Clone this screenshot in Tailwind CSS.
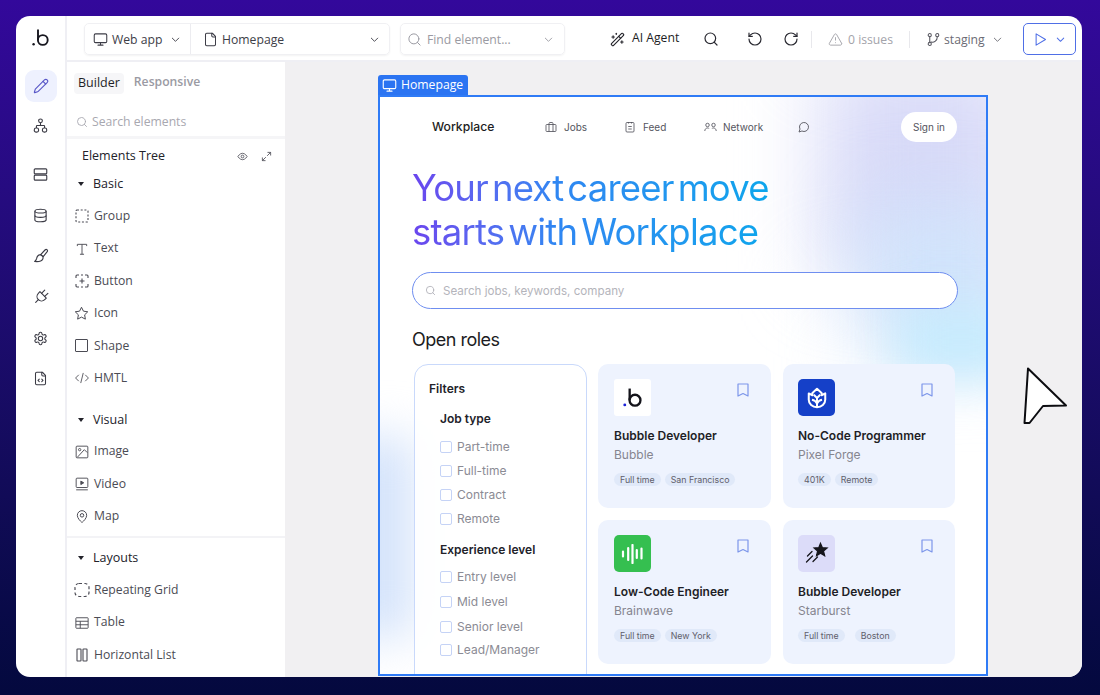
<!DOCTYPE html>
<html lang="en">
<head>
    <meta charset="UTF-8">
    <meta name="viewport" content="width=device-width, initial-scale=1.0">
    <title>Builder</title>
    <script src="https://cdn.jsdelivr.net/npm/@tailwindcss/browser@4"></script>
</head>
<body class="h-[695px] w-[1100px] overflow-hidden bg-linear-to-b from-[#33089b] to-[#04093e] pt-4 pl-4 font-['Open_Sans',sans-serif]">
    <div class="flex h-[661px] w-[1066px] overflow-hidden rounded-[14px] bg-white relative">

        <!-- Icon rail -->
        <aside class="w-[51px] shrink-0 border-r-2 border-[#efeff4] flex flex-col items-center text-[#3b3b45]">
            <div class="h-[50px] w-full flex items-center justify-center pb-[6px] pl-px">
                <svg width="18" height="18" viewBox="0 0 18 18" fill="none" stroke="#17171f" stroke-width="1.9"><circle cx="1.6" cy="15.2" r="1.2" fill="#17171f" stroke="none"/><path d="M6 0.5V11"/><circle cx="10.8" cy="11" r="4.9"/></svg>
            </div>
            <div class="h-10 flex items-center justify-center">
                <div class="size-8 rounded-[9px] bg-[#eef1fe] flex items-center justify-center text-[#5a58c8]">
                    <svg width="16" height="16" viewBox="0 0 24 24" fill="none" stroke="currentColor" stroke-width="1.7" stroke-linecap="round" stroke-linejoin="round"><path d="M21.174 6.812a1 1 0 0 0-3.986-3.987L3.842 16.174a2 2 0 0 0-.5.83l-1.321 4.352a.5.5 0 0 0 .623.622l4.353-1.32a2 2 0 0 0 .83-.497z"/><path d="m15 5 4 4"/></svg>
                </div>
            </div>
            <div class="h-[39px] mb-[9.500px] flex items-center justify-center">
                <svg width="15" height="15" viewBox="0 0 24 24" fill="none" stroke="currentColor" stroke-width="1.8" stroke-linejoin="round"><rect x="15" y="16" width="7" height="6.5" rx="3"/><rect x="2" y="16" width="7" height="6.5" rx="3"/><rect x="9" y="1.5" width="6" height="6" rx="3"/><path d="M5.5 16v-3a1 1 0 0 1 1-1h11a1 1 0 0 1 1 1v3"/><path d="M12 12V7.5"/></svg>
            </div>
            <div class="h-[40.800px] flex items-center justify-center">
                <svg width="15" height="15" viewBox="0 0 24 24" fill="none" stroke="currentColor" stroke-width="1.8"><rect x="2" y="3" width="20" height="8" rx="1.5"/><rect x="2" y="13" width="20" height="8" rx="1.5"/><path d="M6 7h.01M6 17h.01"/></svg>
            </div>
            <div class="h-[40.800px] flex items-center justify-center">
                <svg width="15" height="15" viewBox="0 0 24 24" fill="none" stroke="currentColor" stroke-width="1.8"><ellipse cx="12" cy="5" rx="9" ry="3"/><path d="M3 5V19A9 3 0 0 0 21 19V5"/><path d="M3 12A9 3 0 0 0 21 12"/></svg>
            </div>
            <div class="h-[40.800px] flex items-center justify-center">
                <svg width="16" height="16" viewBox="0 0 24 24" fill="none" stroke="currentColor" stroke-width="1.7" stroke-linejoin="round"><path d="M21 2.500c1 .5 1 2 .3 3l-6 7.500-3.800-3 6.500-7c1-1 2-1.200 3-.5z"/><path d="M11.500 10l3.500 3c.5 3-1 5.500-3.500 6.500-2.500 1-6 1-9 .7 1.500-1 2.500-2.200 3-4.500.5-3 3-5.500 6-5.700z"/></svg>
            </div>
            <div class="h-[40.800px] flex items-center justify-center">
                <svg class="rotate-45" width="18" height="18" viewBox="0 0 24 24" fill="none" stroke="currentColor" stroke-width="1.5" stroke-linecap="round" stroke-linejoin="round"><path d="M9 2v6"/><path d="M15 2v6"/><path d="M12 17v5"/><path d="M6 8h12v3a6 6 0 1 1-12 0z"/></svg>
            </div>
            <div class="h-[40.800px] flex items-center justify-center">
                <svg width="15" height="15" viewBox="0 0 24 24" fill="none" stroke="currentColor" stroke-width="1.7" stroke-linecap="round" stroke-linejoin="round"><path d="M12.220 2h-.44a2 2 0 0 0-2 2v.18a2 2 0 0 1-1 1.730l-.43.25a2 2 0 0 1-2 0l-.15-.08a2 2 0 0 0-2.730.73l-.22.38a2 2 0 0 0 .73 2.730l.15.1a2 2 0 0 1 1 1.720v.51a2 2 0 0 1-1 1.740l-.15.09a2 2 0 0 0-.73 2.730l.22.38a2 2 0 0 0 2.730.73l.15-.08a2 2 0 0 1 2 0l.43.25a2 2 0 0 1 1 1.730V20a2 2 0 0 0 2 2h.44a2 2 0 0 0 2-2v-.18a2 2 0 0 1 1-1.730l.43-.25a2 2 0 0 1 2 0l.15.08a2 2 0 0 0 2.730-.73l.22-.39a2 2 0 0 0-.73-2.730l-.15-.08a2 2 0 0 1-1-1.740v-.5a2 2 0 0 1 1-1.740l.15-.09a2 2 0 0 0 .73-2.730l-.22-.38a2 2 0 0 0-2.730-.73l-.15.08a2 2 0 0 1-2 0l-.43-.25a2 2 0 0 1-1-1.730V4a2 2 0 0 0-2-2z"/><circle cx="12" cy="12" r="3.500"/></svg>
            </div>
            <div class="h-[40.800px] flex items-center justify-center">
                <svg width="15" height="15" viewBox="0 0 24 24" fill="none" stroke="currentColor" stroke-width="1.7" stroke-linecap="round" stroke-linejoin="round"><path d="M15 2H6a2 2 0 0 0-2 2v16a2 2 0 0 0 2 2h12a2 2 0 0 0 2-2V7Z"/><path d="M14 2v4a2 2 0 0 0 2 2h4"/><path d="m10 13-2 2 2 2"/><path d="m14 17 2-2-2-2"/></svg>
            </div>
        </aside>

        <div class="flex-1 flex flex-col min-w-0">
            <!-- Top bar -->
            <header class="h-[46px] shrink-0 border-b-2 border-[#efeff4] flex items-center whitespace-nowrap pl-[17px] pt-[2px] text-[12.200px] text-[#3d3d47]">
                <div class="flex h-8 w-[306px] items-center rounded-[5px] border border-[#f0f0f3] shadow-[0_1px_2px_#0000000d]">
                    <div class="flex h-full w-[106px] items-center border-r border-[#ececf0] pl-[8px]">
                        <svg width="15" height="15" viewBox="0 0 24 24" fill="none" stroke="currentColor" stroke-width="1.7" stroke-linecap="round" stroke-linejoin="round"><rect x="2" y="3" width="20" height="14" rx="2"/><path d="M8 21h8M12 17v4"/></svg>
                        <span class="ml-[4px] mt-[2px]">Web app</span>
                        <svg class="ml-[8px]" width="11" height="11" viewBox="0 0 24 24" fill="none" stroke="currentColor" stroke-width="2" stroke-linecap="round" stroke-linejoin="round"><path d="m5 9 7 7 7-7"/></svg>
                    </div>
                    <div class="flex h-full flex-1 items-center pl-[12px] pr-[9px]">
                        <svg width="15" height="15" viewBox="0 0 24 24" fill="none" stroke="currentColor" stroke-width="1.7" stroke-linecap="round" stroke-linejoin="round"><path d="M15 2H6a2 2 0 0 0-2 2v16a2 2 0 0 0 2 2h12a2 2 0 0 0 2-2V7Z"/><path d="M14 2v4a2 2 0 0 0 2 2h4"/></svg>
                        <span class="ml-[4px] mt-[2px]">Homepage</span>
                        <svg class="ml-auto" width="11" height="11" viewBox="0 0 24 24" fill="none" stroke="currentColor" stroke-width="2" stroke-linecap="round" stroke-linejoin="round"><path d="m5 9 7 7 7-7"/></svg>
                    </div>
                </div>
                <div class="ml-[10px] flex h-8 w-[165px] items-center rounded-[5px] border border-[#f0f0f3] shadow-[0_1px_2px_#0000000d] pl-[6px] pr-[10px] text-[#9a9aa2]">
                    <svg width="15" height="15" viewBox="0 0 24 24" fill="none" stroke="currentColor" stroke-width="1.6" stroke-linecap="round"><circle cx="11" cy="11" r="8"/><path d="m21 21-4.300-4.300"/></svg>
                    <span class="ml-[5px] mt-[2px]">Find element...</span>
                    <svg class="ml-auto" width="11" height="11" viewBox="0 0 24 24" fill="none" stroke="currentColor" stroke-width="2" stroke-linecap="round" stroke-linejoin="round"><path d="m5 9 7 7 7-7"/></svg>
                </div>
                <svg class="ml-[45px] text-[#222229]" width="15" height="15" viewBox="0 0 24 24" fill="none" stroke="currentColor" stroke-width="1.800" stroke-linecap="round" stroke-linejoin="round"><path d="m21.640 3.640-1.280-1.280a1.210 1.210 0 0 0-1.720 0L2.360 18.640a1.210 1.210 0 0 0 0 1.720l1.280 1.280a1.200 1.200 0 0 0 1.720 0L21.640 5.360a1.200 1.200 0 0 0 0-1.720"/><path d="m14 7 3 3"/><path d="M5 6v4"/><path d="M19 14v4"/><path d="M10 2v2"/><path d="M7 8H3"/><path d="M21 16h-4"/></svg>
                <span class="ml-[7px] mb-[1px] w-[50px] text-[#1d1d24]">AI Agent</span>
                <svg class="ml-[21px] text-[#2a2a32]" width="16" height="16" viewBox="0 0 24 24" fill="none" stroke="currentColor" stroke-width="1.800" stroke-linecap="round"><circle cx="11" cy="11" r="8"/><path d="m21 21-4.300-4.300"/></svg>
                <svg class="ml-[28px] text-[#2a2a32]" width="16" height="16" viewBox="0 0 24 24" fill="none" stroke="currentColor" stroke-width="1.800" stroke-linecap="round" stroke-linejoin="round"><path d="M3 12a9 9 0 1 0 9-9 9.750 9.750 0 0 0-6.740 2.740L3 8"/><path d="M3 3v5h5"/></svg>
                <svg class="ml-[20px] text-[#2a2a32]" width="16" height="16" viewBox="0 0 24 24" fill="none" stroke="currentColor" stroke-width="1.800" stroke-linecap="round" stroke-linejoin="round"><path d="M21 12a9 9 0 1 1-9-9c2.520 0 4.930 1 6.740 2.740L21 8"/><path d="M21 3v5h-5"/></svg>
                <div class="ml-[12px] h-[17px] w-px bg-[#e8e8ec]"></div>
                <svg class="ml-[16px] text-[#a3a3aa]" width="15" height="15" viewBox="0 0 24 24" fill="none" stroke="currentColor" stroke-width="1.500" stroke-linecap="round" stroke-linejoin="round"><path d="m21.730 18-8-14a2 2 0 0 0-3.480 0l-8 14A2 2 0 0 0 4 21h16a2 2 0 0 0 1.730-3"/><path d="M12 9v4"/><path d="M12 17h.01"/></svg>
                <span class="ml-[5px] mt-[2px] w-[44px] text-[#a3a3aa]">0 issues</span>
                <div class="ml-[17px] h-[17px] w-px bg-[#e8e8ec]"></div>
                <svg class="ml-[16px] text-[#55555e]" width="15" height="15" viewBox="0 0 24 24" fill="none" stroke="currentColor" stroke-width="1.700" stroke-linecap="round"><path d="M6 7v10"/><circle cx="6" cy="5" r="2.500"/><circle cx="18" cy="5" r="2.500"/><circle cx="6" cy="19" r="2.500"/><path d="M18 8a8 8 0 0 1-10 8"/></svg>
                <span class="ml-[3px] mt-[2px] w-[41px] text-[#6b6b74]">staging</span>
                <svg class="ml-[7px] text-[#6b6b74]" width="11" height="11" viewBox="0 0 24 24" fill="none" stroke="currentColor" stroke-width="2" stroke-linecap="round" stroke-linejoin="round"><path d="m5 9 7 7 7-7"/></svg>
                <div class="ml-[20px] flex h-8 w-[53px] shrink-0 items-center justify-center gap-[7px] rounded-[5px] border border-[#4f6fe6] text-[#4f6fe6]">
                    <svg width="15" height="15" viewBox="0 0 24 24" fill="none" stroke="currentColor" stroke-width="1.700" stroke-linejoin="round"><polygon points="5 3 20 12 5 21 5 3"/></svg>
                    <svg width="11" height="11" viewBox="0 0 24 24" fill="none" stroke="currentColor" stroke-width="2.200" stroke-linecap="round" stroke-linejoin="round"><path d="m5 9 7 7 7-7"/></svg>
                </div>
            </header>

            <div class="flex flex-1 min-h-0">
                <!-- Elements panel -->
                <section class="w-[218px] shrink-0 text-[12.200px] text-[#4b4b54]">
                    <div class="h-[77px] border-b-[3px] border-[#f5f5f7] pl-[7px] text-[12.500px]">
                        <div class="flex items-center pt-[11px]">
                            <span class="rounded-[4px] bg-[#f6f6f8] px-1 py-[1px] text-[#1f1f27]">Builder</span>
                            <span class="ml-[10px] mb-[2px] text-[12.200px] font-semibold text-[#9a9aa3]">Responsive</span>
                        </div>
                        <div class="mt-[19px] flex items-center pl-[2px] text-[12.200px] text-[#a8a8b0]">
                            <svg width="12" height="12" viewBox="0 0 24 24" fill="none" stroke="currentColor" stroke-width="1.800" stroke-linecap="round"><circle cx="11" cy="11" r="8"/><path d="m21 21-4.300-4.300"/></svg>
                            <span class="ml-[4px]">Search elements</span>
                        </div>
                    </div>
                    <div class="mt-px flex h-[32px] items-center justify-between pl-[15px] pr-[13px] text-[12.500px] text-[#22222a]">
                        <span class="font-medium">Elements Tree</span>
                        <div class="flex items-center gap-[13px] text-[#5b5b64]">
                            <svg width="11" height="11" viewBox="0 0 24 24" fill="none" stroke="currentColor" stroke-width="2"><path d="M2 12s4-7 10-7 10 7 10 7-4 7-10 7-10-7-10-7z"/><circle cx="12" cy="12" r="3"/></svg>
                            <svg width="11" height="11" viewBox="0 0 24 24" fill="none" stroke="currentColor" stroke-width="2" stroke-linecap="round" stroke-linejoin="round"><path d="M3 21l7-7"/><path d="M14 10l7-7"/><path d="M15 3h6v6"/><path d="M3 15v6h6"/></svg>
                        </div>
                    </div>
                    <div class="flex h-[24px] items-center pl-[11px] text-[12.500px] font-medium text-[#22222a]"><span class="h-0 w-0 border-x-[3.500px] border-t-[4px] border-x-transparent border-t-[#22222a]"></span><span class="ml-[9px]">Basic</span></div>

                    <div class="flex h-[32.400px] items-center pl-[8px] mt-[4px]">
                        <svg width="14" height="14" viewBox="0 0 14 14" fill="none" stroke="currentColor" stroke-width="1.100" stroke-dasharray="2 1.700"><rect x="1" y="1" width="12" height="12" rx="1"/></svg>
                        <span class="ml-[5px]">Group</span>
                    </div>
                    <div class="flex h-[32.400px] items-center pl-[8px]">
                        <svg width="14" height="14" viewBox="0 0 24 24" fill="none" stroke="currentColor" stroke-width="1.600"><path d="M4 7V4h16v3"/><path d="M8.500 21h7"/><path d="M12 4v17"/></svg>
                        <span class="ml-[5px]">Text</span>
                    </div>
                    <div class="flex h-[32.400px] items-center pl-[8px]">
                        <svg width="14" height="14" viewBox="0 0 14 14" fill="none" stroke="currentColor" stroke-width="1.100"><path d="M1 4V2a1 1 0 0 1 1-1h2M10 1h2a1 1 0 0 1 1 1v2M13 10v2a1 1 0 0 1-1 1h-2M4 13H2a1 1 0 0 1-1-1v-2M7 4.500v5M4.500 7h5M6 1h2M6 13h2"/></svg>
                        <span class="ml-[5px]">Button</span>
                    </div>
                    <div class="flex h-[32.400px] items-center pl-[7px]">
                        <svg width="15" height="15" viewBox="0 0 24 24" fill="none" stroke="currentColor" stroke-width="1.600" stroke-linejoin="round"><path d="M12 2l3.090 6.260L22 9.270l-5 4.870 1.180 6.880L12 17.770l-6.180 3.250L7 14.140 2 9.270l6.910-1.010z"/></svg>
                        <span class="ml-[5px]">Icon</span>
                    </div>
                    <div class="flex h-[32.400px] items-center pl-[8px]">
                        <span class="size-[13px] rounded-[1px] border border-[#4b4b54]"></span>
                        <span class="ml-[6px]">Shape</span>
                    </div>
                    <div class="flex h-[32.400px] items-center pl-[7px]">
                        <svg width="16" height="14" viewBox="0 0 24 24" fill="none" stroke="currentColor" stroke-width="1.500" stroke-linecap="round" stroke-linejoin="round"><path d="m6 7-5 5 5 5"/><path d="m18 7 5 5-5 5"/><path d="m14 4-4 16"/></svg>
                        <span class="ml-[4px]">HMTL</span>
                    </div>

                    <div class="flex h-[24px] items-center pl-[11px] mt-[14px] text-[12.500px] font-medium text-[#22222a]"><span class="h-0 w-0 border-x-[3.500px] border-t-[4px] border-x-transparent border-t-[#22222a]"></span><span class="ml-[9px]">Visual</span></div>
                    <div class="flex h-[32.400px] items-center pl-[8px] mt-[3px]">
                        <svg width="14" height="14" viewBox="0 0 24 24" fill="none" stroke="currentColor" stroke-width="1.600"><rect x="2" y="2" width="20" height="20" rx="1.500"/><circle cx="8" cy="8" r="2"/><path d="m21 13-5-5L4 21"/></svg>
                        <span class="ml-[5px]">Image</span>
                    </div>
                    <div class="flex h-[32.400px] items-center pl-[8px]">
                        <svg width="14" height="14" viewBox="0 0 24 24" fill="none" stroke="currentColor" stroke-width="1.600"><rect x="2" y="2" width="20" height="16" rx="1.500"/><path d="M2 22h20"/><path d="M10 7l5 3-5 3z" fill="currentColor"/></svg>
                        <span class="ml-[5px]">Video</span>
                    </div>
                    <div class="flex h-[32.400px] items-center pl-[8px]">
                        <svg width="14" height="15" viewBox="0 0 24 24" fill="none" stroke="currentColor" stroke-width="1.700"><path d="M20 10c0 4.993-5.539 10.193-7.399 11.799a1 1 0 0 1-1.202 0C9.539 20.193 4 14.993 4 10a8 8 0 0 1 16 0"/><circle cx="12" cy="10" r="3"/></svg>
                        <span class="ml-[5px]">Map</span>
                    </div>
                    <div class="mt-[3px] h-[2px] bg-[#f3f3f6]"></div>

                    <div class="flex h-[24px] items-center pl-[11px] mt-[8.500px] text-[12.500px] font-medium text-[#22222a]"><span class="h-0 w-0 border-x-[3.500px] border-t-[4px] border-x-transparent border-t-[#22222a]"></span><span class="ml-[9px]">Layouts</span></div>
                    <div class="flex h-[32.400px] items-center pl-[7px] mt-[4px]">
                        <svg width="16" height="16" viewBox="0 0 16 16" fill="none" stroke="currentColor" stroke-width="1.200" stroke-dasharray="3 2.400"><rect x="1" y="1.500" width="14" height="13" rx="4"/></svg>
                        <span class="ml-[4px]">Repeating Grid</span>
                    </div>
                    <div class="flex h-[32.400px] items-center pl-[8px]">
                        <svg width="14" height="14" viewBox="0 0 24 24" fill="none" stroke="currentColor" stroke-width="1.600"><rect x="1.500" y="3" width="21" height="18" rx="1"/><path d="M1.500 9h21M1.500 15h21M9 9v12"/></svg>
                        <span class="ml-[5px]">Table</span>
                    </div>
                    <div class="flex h-[32.400px] items-center pl-[9px]">
                        <svg width="12" height="14" viewBox="0 0 12 14" fill="none" stroke="currentColor" stroke-width="1.100"><rect x="1" y="1" width="4" height="12" rx=".6"/><rect x="7" y="1" width="4" height="12" rx=".6"/></svg>
                        <span class="ml-[6px]">Horizontal List</span>
                    </div>
                </section>

                <!-- Canvas -->
                <main class="flex-1 min-w-0 bg-[#f1f0f2] pl-[93px] pt-[13px] flex flex-col relative">
                    <div class="flex h-5 w-[90px] items-center gap-[4px] rounded-t-[3px] bg-[#2b74f2] pl-[4px] text-[12.200px] text-white">
                        <svg width="15" height="15" viewBox="0 0 24 24" fill="none" stroke="currentColor" stroke-width="1.800" stroke-linecap="round" stroke-linejoin="round"><rect x="2" y="3" width="20" height="14" rx="2"/><path d="M8 21h8M12 17v4"/></svg>
                        <span>Homepage</span>
                    </div>
                    <div class="relative mb-px h-[581px] w-[610px] overflow-hidden border-2 border-[#2f7bf6] bg-white font-['Inter',sans-serif]">
                        <!-- Background blurs -->
                        <div class="absolute -right-[40px] -top-[40px] h-[220px] w-[205px] bg-[#d8daf8] blur-2xl"></div>
                        <div class="absolute -right-[40px] top-[110px] h-[150px] w-[165px] bg-[#cfe3fb] blur-2xl"></div>
                        <div class="absolute -right-[40px] top-[210px] h-[70px] w-[130px] bg-[#c6ebfd] blur-xl"></div>
                        <div class="absolute -left-[50px] top-[340px] h-[200px] w-[85px] bg-[#d4e3fb] blur-xl"></div>

                        <div class="relative">
                            <!-- Site nav -->
                            <div class="flex h-[30px] items-center pl-[52px] mt-[15px] text-[10px] text-[#55555e]">
                                <span class="w-[113px] text-[12.200px] font-medium text-[#1c1c22]">Workplace</span>
                                <svg width="12" height="12" viewBox="0 0 24 24" fill="none" stroke="currentColor" stroke-width="1.700"><rect x="2" y="7" width="20" height="14" rx="1.500"/><path d="M8 21V5a2 2 0 0 1 2-2h4a2 2 0 0 1 2 2v16"/></svg>
                                <span class="ml-[7px] w-[60px]">Jobs</span>
                                <svg width="12" height="12" viewBox="0 0 24 24" fill="none" stroke="currentColor" stroke-width="1.700"><rect x="4" y="3" width="16" height="19" rx="2"/><path d="M9 2v3M15 2v3M8.500 11h7M8.500 16h7"/></svg>
                                <span class="ml-[7px] w-[61px]">Feed</span>
                                <svg width="13" height="12" viewBox="0 0 26 24" fill="none" stroke="currentColor" stroke-width="1.700"><circle cx="7" cy="8" r="3.500"/><circle cx="19" cy="8" r="3.500"/><path d="M1.500 20c.5-4 2.500-6 5.500-6s3 1 3 1M24.500 20c-.5-4-2.500-6-5.500-6s-3 1-3 1"/></svg>
                                <span class="ml-[6px] w-[75px]">Network</span>
                                <svg width="12" height="12" viewBox="0 0 24 24" fill="none" stroke="currentColor" stroke-width="1.800" stroke-linejoin="round"><path d="M7.900 20A9 9 0 1 0 4 16.100L2 22z"/></svg>
                                <span class="ml-[91px] flex h-[30px] w-[56px] items-center justify-center rounded-full bg-white">Sign in</span>
                            </div>

                            <!-- Hero -->
                            <div class="pl-[32px]">
                                <h1 class="mt-6 w-fit bg-linear-to-r from-[#6a45ee] via-[#2f86f2] via-40% to-[#0aa5ec] bg-clip-text text-[36.500px] leading-[44px] font-normal tracking-[-0.800px] [word-spacing:-5.500px] text-transparent">Your next career move<br>starts with Workplace</h1>
                                <div class="mt-[18px] flex h-[37px] w-[546px] items-center rounded-full border border-[#6f8ef0] bg-white pl-[12px] text-[11.600px] text-[#b4b4bb]">
                                    <svg width="11" height="11" viewBox="0 0 24 24" fill="none" stroke="currentColor" stroke-width="2" stroke-linecap="round"><circle cx="11" cy="11" r="8"/><path d="m21 21-4.300-4.300"/></svg>
                                    <span class="ml-[7px] mt-[2px]">Search jobs, keywords, company</span>
                                </div>
                                <h2 class="mt-[19px] h-6 text-[18px] leading-6 tracking-[-0.500px] text-[#1c1c22]">Open roles</h2>

                                <div class="mt-3 flex gap-[11px] pl-[2px]">
                                    <!-- Filters -->
                                    <div class="h-[330px] w-[173px] shrink-0 rounded-[14px] border border-[#c9d9fb] bg-white/90 pl-[14px] pt-[16px] text-[12px] text-[#8b8b94]">
                                        <p class="font-semibold leading-[15px] text-[#22222a]">Filters</p>
                                        <p class="ml-[11px] mt-[15px] font-semibold leading-[15px] text-[#22222a]">Job type</p>
                                        <div class="ml-[11px] mt-[13px] flex h-[15px] items-center gap-[5px]"><span class="size-[12px] rounded-[2px] border border-[#c5d3f6]"></span>Part-time</div>
                                        <div class="ml-[11px] mt-[9.300px] flex h-[15px] items-center gap-[5px]"><span class="size-[12px] rounded-[2px] border border-[#c5d3f6]"></span>Full-time</div>
                                        <div class="ml-[11px] mt-[9.300px] flex h-[15px] items-center gap-[5px]"><span class="size-[12px] rounded-[2px] border border-[#c5d3f6]"></span>Contract</div>
                                        <div class="ml-[11px] mt-[9.300px] flex h-[15px] items-center gap-[5px]"><span class="size-[12px] rounded-[2px] border border-[#c5d3f6]"></span>Remote</div>
                                        <p class="ml-[11px] mt-[15px] font-semibold leading-[15px] text-[#22222a]">Experience level</p>
                                        <div class="ml-[11px] mt-[13px] flex h-[15px] items-center gap-[5px]"><span class="size-[12px] rounded-[2px] border border-[#c5d3f6]"></span>Entry level</div>
                                        <div class="ml-[11px] mt-[10px] flex h-[15px] items-center gap-[5px]"><span class="size-[12px] rounded-[2px] border border-[#c5d3f6]"></span>Mid level</div>
                                        <div class="ml-[11px] mt-[9.300px] flex h-[15px] items-center gap-[5px]"><span class="size-[12px] rounded-[2px] border border-[#c5d3f6]"></span>Senior level</div>
                                        <div class="ml-[11px] mt-[8px] flex h-[15px] items-center gap-[5px]"><span class="size-[12px] rounded-[2px] border border-[#c5d3f6]"></span>Lead/Manager</div>
                                    </div>

                                    <!-- Job cards -->
                                    <div class="grid grid-cols-[173px_172px] grid-rows-[144px_144px] gap-x-3 gap-y-3">
                                        <div class="rounded-[10px] bg-[#eef3fe] p-4 pt-[15px]">
                                            <div class="flex items-start justify-between pr-[6px]">
                                                <div class="flex size-[37px] items-center justify-center rounded-[3px] bg-white">
                                                    <svg width="20" height="20" viewBox="0 0 18 18" fill="none" stroke="#14141b" stroke-width="2.100"><circle cx="1.600" cy="15.200" r="1.300" fill="#1d22d8" stroke="none"/><path d="M6 .5V11"/><circle cx="10.800" cy="11" r="4.900"/></svg>
                                                </div>
                                                <svg class="mt-[4px]" width="12" height="14" viewBox="0 0 12 14" fill="none" stroke="#7d96ea" stroke-width="1.200" stroke-linejoin="round"><path d="M1 1h10v12L6 10.500 1 13z"/></svg>
                                            </div>
                                            <p class="mt-[12px] text-[12px] leading-[15px] font-semibold text-[#1e1e26]">Bubble Developer</p>
                                            <p class="mt-[4px] text-[12px] leading-[15px] text-[#85858f]">Bubble</p>
                                            <div class="mt-[11px] flex gap-1 text-[8.800px] leading-[13px] text-[#60606b]"><span class="rounded-full bg-[#e0e9f9] px-[6px]">Full time</span><span class="rounded-full bg-[#e0e9f9] px-[6px]">San Francisco</span></div>
                                        </div>
                                        <div class="rounded-[10px] bg-[#eef3fe] p-4 pt-[15px] pl-[15px]">
                                            <div class="flex items-start justify-between pr-[6px]">
                                                <div class="flex size-[37px] items-center justify-center rounded-[5px] bg-[#1540c8]">
                                                    <svg width="22" height="22" viewBox="0 0 24 24" fill="none" stroke="white" stroke-width="2.200" stroke-linejoin="round"><path d="M12 2l5 4.500V9l4-2v7c0 4.500-4 8-9 8s-9-3.500-9-8V7l4 2V6.500z"/><path d="M8.500 8.500 12 12l3.500-3.500"/><path d="M12 12v10"/><path d="M6.500 14c2.500.5 4.500 2 5.500 4 1-2 3-3.500 5.500-4"/></svg>
                                                </div>
                                                <svg class="mt-[4px]" width="12" height="14" viewBox="0 0 12 14" fill="none" stroke="#7d96ea" stroke-width="1.200" stroke-linejoin="round"><path d="M1 1h10v12L6 10.500 1 13z"/></svg>
                                            </div>
                                            <p class="mt-[12px] text-[12px] leading-[15px] font-semibold text-[#1e1e26]">No-Code Programmer</p>
                                            <p class="mt-[4px] text-[12px] leading-[15px] text-[#85858f]">Pixel Forge</p>
                                            <div class="mt-[11px] flex gap-1 text-[8.800px] leading-[13px] text-[#60606b]"><span class="rounded-full bg-[#e0e9f9] px-[6px]">401K</span><span class="rounded-full bg-[#e0e9f9] px-[6px]">Remote</span></div>
                                        </div>
                                        <div class="rounded-[10px] bg-[#eef3fe] p-4 pt-[15px]">
                                            <div class="flex items-start justify-between pr-[6px]">
                                                <div class="flex size-[37px] items-center justify-center rounded-[5px] bg-[#35bf50]">
                                                    <svg width="23" height="20" viewBox="0 0 23 20" fill="none" stroke="white" stroke-width="2.200" stroke-linecap="round"><path d="M2 7.500v5M7.200 4v12M11.500 1v18M15.800 6v8M20.500 4.500v10"/></svg>
                                                </div>
                                                <svg class="mt-[4px]" width="12" height="14" viewBox="0 0 12 14" fill="none" stroke="#7d96ea" stroke-width="1.200" stroke-linejoin="round"><path d="M1 1h10v12L6 10.500 1 13z"/></svg>
                                            </div>
                                            <p class="mt-[12px] text-[12px] leading-[15px] font-semibold text-[#1e1e26]">Low-Code Engineer</p>
                                            <p class="mt-[4px] text-[12px] leading-[15px] text-[#85858f]">Brainwave</p>
                                            <div class="mt-[11px] flex gap-1 text-[8.800px] leading-[13px] text-[#60606b]"><span class="rounded-full bg-[#e0e9f9] px-[6px]">Full time</span><span class="rounded-full bg-[#e0e9f9] px-[6px]">New York</span></div>
                                        </div>
                                        <div class="rounded-[10px] bg-[#eef3fe] p-4 pt-[15px] pl-[15px]">
                                            <div class="flex items-start justify-between pr-[6px]">
                                                <div class="flex size-[37px] items-center justify-center rounded-[5px] bg-[#dcdcf9]">
                                                    <svg width="25" height="25" viewBox="0 0 25 25" fill="none" stroke="#16161d" stroke-width="1.300" stroke-linecap="round"><path d="M16.500 2.500l1.900 4.200 4.600.4-3.500 3 1.100 4.500-4.100-2.400-3.900 2.400 1-4.500-3.400-3 4.600-.4z" fill="#16161d"/><path d="M8 10.500l-4.500 4.500M8.500 15l-6 6M13.500 16l-4.500 4.500"/></svg>
                                                </div>
                                                <svg class="mt-[4px]" width="12" height="14" viewBox="0 0 12 14" fill="none" stroke="#7d96ea" stroke-width="1.200" stroke-linejoin="round"><path d="M1 1h10v12L6 10.500 1 13z"/></svg>
                                            </div>
                                            <p class="mt-[12px] text-[12px] leading-[15px] font-semibold text-[#1e1e26]">Bubble Developer</p>
                                            <p class="mt-[4px] text-[12px] leading-[15px] text-[#85858f]">Starburst</p>
                                            <div class="mt-[11px] flex gap-[10px] text-[8.800px] leading-[13px] text-[#60606b]"><span class="rounded-full bg-[#e0e9f9] px-[6px]">Full time</span><span class="rounded-full bg-[#e0e9f9] px-[6px]">Boston</span></div>
                                        </div>
                                    </div>
                                </div>
                            </div>
                        </div>
                    </div>
                    <!-- Pointer -->
                    <svg class="absolute left-[738px] top-[305px]" width="46" height="60" viewBox="0 0 46 60" fill="white" stroke="#0c0c10" stroke-width="2" stroke-linejoin="round"><path d="M5 1.500L43 38.500 20 39 6.500 56 1.500 56z"/></svg>
                </main>
            </div>
        </div>
    </div>
</body>
</html>
